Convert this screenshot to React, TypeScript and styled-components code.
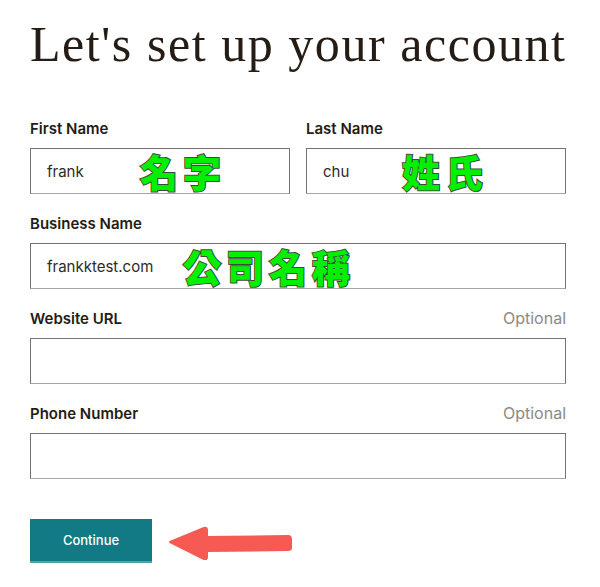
import React from "react";
import styled, { createGlobalStyle } from "styled-components";

const Global = createGlobalStyle`
  html, body { margin: 0; padding: 0; background: #ffffff; }
  body { font-family: Inter, "Noto Sans", sans-serif; color: #241c15; }
  * { box-sizing: border-box; }
`;

const Page = styled.div`
  width: 600px;
  padding: 0 34px 0 30px;
`;

const Title = styled.h1`
  margin: 0;
  padding-top: 14px;
  height: 118px;
  font-family: "Liberation Serif", "DejaVu Serif", serif;
  font-weight: 400;
  font-size: 50px;
  line-height: 60px;
  letter-spacing: 1.55px;
  color: #241c15;
  white-space: nowrap;
`;

const Row = styled.div`
  display: grid;
  grid-template-columns: 1fr 1fr;
  column-gap: 16px;
`;

const Field = styled.div`
  display: flex;
  flex-direction: column;
  margin-bottom: 19px;
`;

const LabelRow = styled.div`
  display: flex;
  justify-content: space-between;
  align-items: center;
  height: 20px;
  margin-bottom: 10px;
`;

const Label = styled.label`
  font-size: 15px;
  font-weight: 600;
  color: #241c15;
`;

const Optional = styled.span`
  font-size: 16px;
  font-weight: 400;
  color: #8c8986;
`;

const InputWrap = styled.div`
  position: relative;
  height: 46px;
`;

const Input = styled.input`
  width: 100%;
  height: 46px;
  border: 1px solid #77726f;
  border-bottom-color: #a9a6a4;
  border-radius: 0;
  padding: 0 16px;
  font-family: Inter, "Noto Sans", sans-serif;
  font-size: 15px;
  color: #2f2a26;
  background: #fff;
  outline: none;
`;

const Note = styled.span<{ $left: number }>`
  position: absolute;
  top: 50%;
  left: ${(p) => p.$left}px;
  transform: translateY(-50%);
  font-family: "Noto Sans CJK TC", "Noto Sans CJK SC", sans-serif;
  font-weight: 900;
  font-size: 38px;
  line-height: 1;
  letter-spacing: 5px;
  color: #00f000;
  -webkit-text-stroke: 2px #3f4a3f;
  paint-order: stroke fill;
  pointer-events: none;
  white-space: nowrap;
`;

const Footer = styled.div`
  display: flex;
  align-items: center;
  gap: 16px;
  margin-top: 40px;
`;

const Button = styled.button`
  width: 122px;
  height: 44px;
  border: 0;
  border-bottom: 2px solid #4fa3aa;
  background: #127a84;
  color: #ffffff;
  font-family: Inter, "Noto Sans", sans-serif;
  font-size: 13px;
  font-weight: 500;
  cursor: pointer;
`;

const Arrow = () => (
  <svg width="124" height="34" viewBox="0 0 124 34" style={{ marginTop: 4 }}>
    <path
      d="M2 16 L36 2 Q39 1 39 4 L39 11 L120 10 Q123 10 123 13 L123 22 Q123 24 120 24 L39 25 L39 31 Q39 34 36 33 Z"
      fill="#f65a52"
      stroke="#f65a52"
      strokeWidth="2"
      strokeLinejoin="round"
    />
  </svg>
);

type FieldProps = {
  label: string;
  value?: string;
  optional?: boolean;
  note?: string;
  noteLeft?: number;
};

const FormField = ({ label, value, optional, note, noteLeft = 0 }: FieldProps) => (
  <Field>
    <LabelRow>
      <Label>{label}</Label>
      {optional && <Optional>Optional</Optional>}
    </LabelRow>
    <InputWrap>
      <Input defaultValue={value} />
      {note && <Note $left={noteLeft}>{note}</Note>}
    </InputWrap>
  </Field>
);

export default function App() {
  return (
    <Page>
      <Global />
      <Title>Let's set up your account</Title>
      <Row>
        <FormField label="First Name" value="frank" note="名字" noteLeft={110} />
        <FormField label="Last Name" value="chu" note="姓氏" noteLeft={96} />
      </Row>
      <FormField label="Business Name" value="frankktest.com" note="公司名稱" noteLeft={153} />
      <FormField label="Website URL" optional />
      <FormField label="Phone Number" optional />
      <Footer>
        <Button>Continue</Button>
        <Arrow />
      </Footer>
    </Page>
  );
}
